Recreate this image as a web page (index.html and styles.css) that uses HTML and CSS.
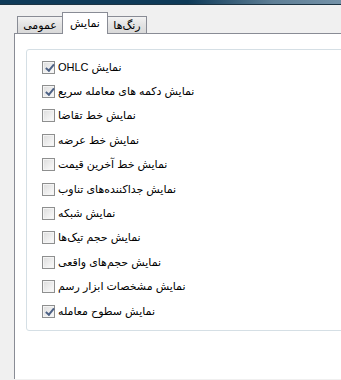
FILE: index.html
```html
<!DOCTYPE html>
<html lang="fa">
<head>
    <meta charset="UTF-8">
    <title>تنظیمات نمودار</title>
    <link rel="stylesheet" href="styles.css">
</head>
<body>
    <div class="titlebar"></div>
    <div class="dialog">
        <div class="tabs">
            <div class="tab">عمومی</div>
            <div class="tab active">نمایش</div>
            <div class="tab narrow">رنگ‌ها</div>
        </div>
        <div class="panel">
            <div class="group">
                <label class="row"><span class="box checked"></span><span class="label" dir="rtl">نمایش OHLC</span></label>
                <label class="row"><span class="box checked"></span><span class="label" dir="rtl">نمایش دکمه های معامله سریع</span></label>
                <label class="row"><span class="box"></span><span class="label" dir="rtl">نمایش خط تقاضا</span></label>
                <label class="row"><span class="box"></span><span class="label" dir="rtl">نمایش خط عرضه</span></label>
                <label class="row"><span class="box"></span><span class="label" dir="rtl">نمایش خط آخرین قیمت</span></label>
                <label class="row"><span class="box"></span><span class="label" dir="rtl">نمایش جداکننده‌های تناوب</span></label>
                <label class="row"><span class="box"></span><span class="label" dir="rtl">نمایش شبکه</span></label>
                <label class="row"><span class="box"></span><span class="label" dir="rtl">نمایش حجم تیک‌ها</span></label>
                <label class="row"><span class="box"></span><span class="label" dir="rtl">نمایش حجم‌های واقعی</span></label>
                <label class="row"><span class="box"></span><span class="label" dir="rtl">نمایش مشخصات ابزار رسم</span></label>
                <label class="row"><span class="box checked"></span><span class="label" dir="rtl">نمایش سطوح معامله</span></label>
            </div>
        </div>
    </div>
</body>
</html>
```

FILE: styles.css
```css
/* Global */
body {
    margin: 0;
    background: #f0f0f0;
    font-family: 'Liberation Sans', 'DejaVu Sans', sans-serif;
    font-size: 11px;
    color: #000;
    overflow: hidden;
}
.titlebar {
    height: 4px;
    background: linear-gradient(to right, #0e3a58 55%, #5f7f96 80%, #7492a8);
    border-bottom: 1px solid #1b3343;
}
.dialog {
    padding-left: 14px;
}

/* Tabs */
.tabs {
    display: flex;
    align-items: flex-end;
    height: 28px;
    padding-left: 3px;
}
.tab {
    position: relative;
    box-sizing: border-box;
    width: 46px;
    height: 17px;
    line-height: 17px;
    margin-left: -1px;
    border: 1px solid #898c95;
    border-bottom: none;
    background: linear-gradient(#f3f3f3, #e4e4e4 45%, #d9d9d9);
    text-align: center;
}
.tab:first-child {
    margin-left: 0;
}
.tab.narrow {
    width: 40px;
}
.tab.active {
    z-index: 2;
    height: 22px;
    line-height: 20px;
    margin-bottom: -1px;
    background: #fff;
}

/* Panel */
.panel {
    height: 346px;
    border-top: 1px solid #898c95;
    border-left: 1px solid #898c95;
    background: #fff;
    padding: 15px 0 0 11px;
    box-sizing: border-box;
}
.group {
    width: 305px;
    height: 275px;
    border: 1px solid #d5dfe5;
    border-radius: 3px;
    padding: 5px 0 0 15px;
}

/* Checkbox rows */
.row {
    display: flex;
    align-items: center;
    height: 24.4px;
}
.box {
    position: relative;
    flex: none;
    width: 11px;
    height: 11px;
    margin-right: 3px;
    border: 1px solid #8e8f8f;
    background: linear-gradient(135deg, #dcdcdc, #f6f6f6 80%);
    box-shadow: inset 0 0 0 1px #f4f4f4;
}
.box.checked::after {
    content: "";
    position: absolute;
    left: 1px;
    top: 1px;
    width: 3px;
    height: 7px;
    border: solid #4d6185;
    border-width: 0 2px 2px 0;
    transform: rotate(40deg);
    transform-origin: 100% 100%;
}
.label {
    white-space: nowrap;
}
```
